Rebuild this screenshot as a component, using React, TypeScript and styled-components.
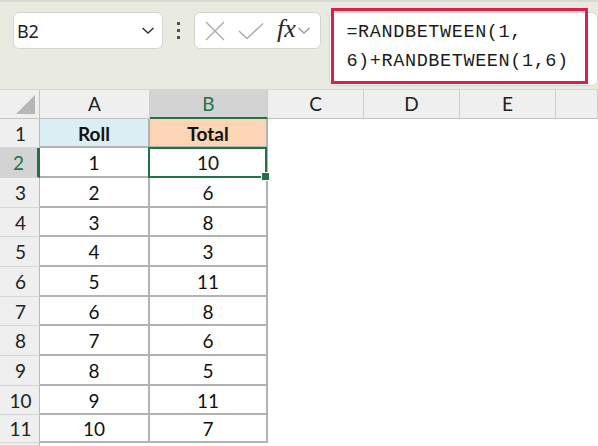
import React from "react";
import styled, { createGlobalStyle, css } from "styled-components";

const GlobalStyle = createGlobalStyle`
  html, body { margin: 0; padding: 0; background: #ffffff; }
  body { width: 598px; height: 446px; overflow: hidden; font-family: "Noto Sans", "Liberation Sans", sans-serif; }
  * { box-sizing: border-box; }
`;

const GREEN = "#217346";

const Page = styled.div`
  width: 598px;
  height: 446px;
  display: flex;
  flex-direction: column;
  overflow: hidden;
`;

const Toolbar = styled.div`
  height: 90px;
  flex: 0 0 90px;
  background: #e9eae0;
  border-top: 2px solid #d9dad1;
  border-bottom: 1px solid #d6d7ce;
  display: flex;
  align-items: flex-start;
  padding: 10px 0 0 13px;
`;

const Box = styled.div`
  height: 37px;
  background: #ffffff;
  border: 1px solid #d5d6cd;
  border-radius: 6px;
  display: flex;
  align-items: center;
`;

const NameBox = styled(Box)`
  width: 151px;
  padding: 0 7px 0 3px;
  justify-content: space-between;
`;

const NameText = styled.span`
  font-family: "Noto Sans", "Liberation Sans", sans-serif;
  font-size: 18px;
  color: #222222;
  letter-spacing: -0.3px;
`;

const Dots = styled.div`
  width: 31px;
  height: 37px;
  display: flex;
  flex-direction: column;
  align-items: center;
  justify-content: center;
  gap: 4px;
  & > span {
    width: 3px;
    height: 3px;
    background: #505050;
  }
`;

const FxBox = styled(Box)`
  width: 128px;
  padding: 0 4px 0 10px;
`;

const FxText = styled.span`
  font-family: "Liberation Serif", "DejaVu Serif", serif;
  font-style: italic;
  font-size: 26px;
  color: #262626;
  margin: -3px 1px 0 13px;
  letter-spacing: 0px;
`;

const FormulaBox = styled.div`
  position: relative;
  margin-left: 8px;
  width: 270px;
  height: 74px;
  background: #ffffff;
  border: 1px solid #d5d6cd;
  border-radius: 6px;
  padding: 5px 0 0 16px;
`;

const FormulaText = styled.div`
  font-family: "Liberation Mono", "DejaVu Sans Mono", monospace;
  font-size: 18.5px;
  letter-spacing: 0.6px;
  line-height: 29px;
  color: #1c1c1c;
  white-space: pre;
`;

const Highlight = styled.div`
  position: absolute;
  left: 1px;
  top: -5px;
  width: 257px;
  height: 76px;
  border: 3px solid #de1f4a;
  pointer-events: none;
`;

const Sheet = styled.div`
  flex: 1;
  display: grid;
  grid-template-columns: 40px 110px 118px 96px 96px 96px 1fr;
  grid-template-rows: 29px 29px 30px 30px 29px 30px 30px 29px 30px 30px 29px 28px 1fr;
  font-family: Lato, "Open Sans", sans-serif;
  font-size: 19px;
  color: #111111;
`;

const Corner = styled.div`
  background: #efefef;
  border-right: 1px solid #c3c3c3;
  border-bottom: 1px solid #c3c3c3;
  display: flex;
  align-items: flex-end;
  justify-content: flex-end;
  padding: 0 4px 4px 0;
`;

const ColHeader = styled.div<{ $selected?: boolean }>`
  background: #efefef;
  border-right: 1px solid #cfcfcf;
  border-bottom: 1px solid #c3c3c3;
  display: flex;
  align-items: center;
  justify-content: center;
  color: #222222;
  padding-bottom: 1px;
  ${(p) =>
    p.$selected &&
    css`
      background: #d3d3d3;
      color: ${GREEN};
      border-bottom: 2px solid ${GREEN};
      padding-bottom: 0;
    `}
`;

const RowHeader = styled.div<{ $selected?: boolean }>`
  background: #efefef;
  border-right: 1px solid #b9b9b9;
  border-bottom: 1px solid #d6d6d6;
  display: flex;
  align-items: center;
  justify-content: center;
  color: #222222;
  padding-left: 2px;
  ${(p) =>
    p.$selected &&
    css`
      background: #d3d3d3;
      color: ${GREEN};
      border-right: 3px solid ${GREEN};
      padding-left: 0;
    `}
`;

const Cell = styled.div<{ $bg?: string; $bold?: boolean }>`
  position: relative;
  background: ${(p) => p.$bg || "#ffffff"};
  border-right: 2px solid #b2b2b2;
  border-bottom: 2px solid #b2b2b2;
  display: flex;
  align-items: center;
  justify-content: center;
  font-weight: ${(p) => (p.$bold ? 700 : 400)};
  padding-top: 1px;
`;

const Empty = styled.div`
  background: #ffffff;
`;

const Selection = styled.div`
  position: absolute;
  z-index: 2;
  left: -2px;
  top: -1px;
  right: -1px;
  bottom: -2px;
  border: 2px solid ${GREEN};
  pointer-events: none;
`;

const FillHandle = styled.div`
  position: absolute;
  right: -5px;
  bottom: -5px;
  width: 9px;
  height: 9px;
  background: ${GREEN};
  border: 1px solid #ffffff;
`;

const Chevron = ({ color }: { color: string }) => (
  <svg width="14" height="9" viewBox="0 0 14 9">
    <path d="M1.5 2 L7 7 L12.5 2" fill="none" stroke={color} strokeWidth="1.5" />
  </svg>
);

const rows: Array<[number, number]> = [
  [1, 10],
  [2, 6],
  [3, 8],
  [4, 3],
  [5, 11],
  [6, 8],
  [7, 6],
  [8, 5],
  [9, 11],
  [10, 7],
];

export default function App() {
  return (
    <Page>
      <GlobalStyle />
      <Toolbar>
        <NameBox>
          <NameText>B2</NameText>
          <Chevron color="#333333" />
        </NameBox>
        <Dots>
          <span />
          <span />
          <span />
        </Dots>
        <FxBox>
          <svg width="20" height="20" viewBox="0 0 20 20">
            <path d="M1 1 L19 19 M19 1 L1 19" stroke="#ababab" strokeWidth="1.4" fill="none" />
          </svg>
          <svg width="26" height="18" viewBox="0 0 26 18" style={{ marginLeft: 13 }}>
            <path d="M1 9 L9 16.5 L25 1.5" stroke="#ababab" strokeWidth="1.4" fill="none" />
          </svg>
          <FxText>fx</FxText>
          <Chevron color="#9a9a9a" />
        </FxBox>
        <FormulaBox>
          <FormulaText>{"=RANDBETWEEN(1,\n6)+RANDBETWEEN(1,6)"}</FormulaText>
          <Highlight />
        </FormulaBox>
      </Toolbar>
      <Sheet>
        <Corner>
          <svg width="19" height="19" viewBox="0 0 19 19">
            <path d="M19 0 L19 19 L0 19 Z" fill="#b6b6b6" />
          </svg>
        </Corner>
        <ColHeader>A</ColHeader>
        <ColHeader $selected>B</ColHeader>
        <ColHeader>C</ColHeader>
        <ColHeader>D</ColHeader>
        <ColHeader>E</ColHeader>
        <ColHeader />

        <RowHeader>1</RowHeader>
        <Cell $bg="#daeef3" $bold>
          Roll
        </Cell>
        <Cell $bg="#fcd5b4" $bold>
          Total
        </Cell>
        <Empty />
        <Empty />
        <Empty />
        <Empty />

        {rows.map(([roll, total], i) => (
          <React.Fragment key={i}>
            <RowHeader $selected={i === 0}>{i + 2}</RowHeader>
            <Cell>{roll}</Cell>
            <Cell>
              {total}
              {i === 0 && (
                <Selection>
                  <FillHandle />
                </Selection>
              )}
            </Cell>
            <Empty />
            <Empty />
            <Empty />
            <Empty />
          </React.Fragment>
        ))}
        <RowHeader />
        <Empty />
        <Empty />
        <Empty />
        <Empty />
        <Empty />
        <Empty />
      </Sheet>
    </Page>
  );
}
